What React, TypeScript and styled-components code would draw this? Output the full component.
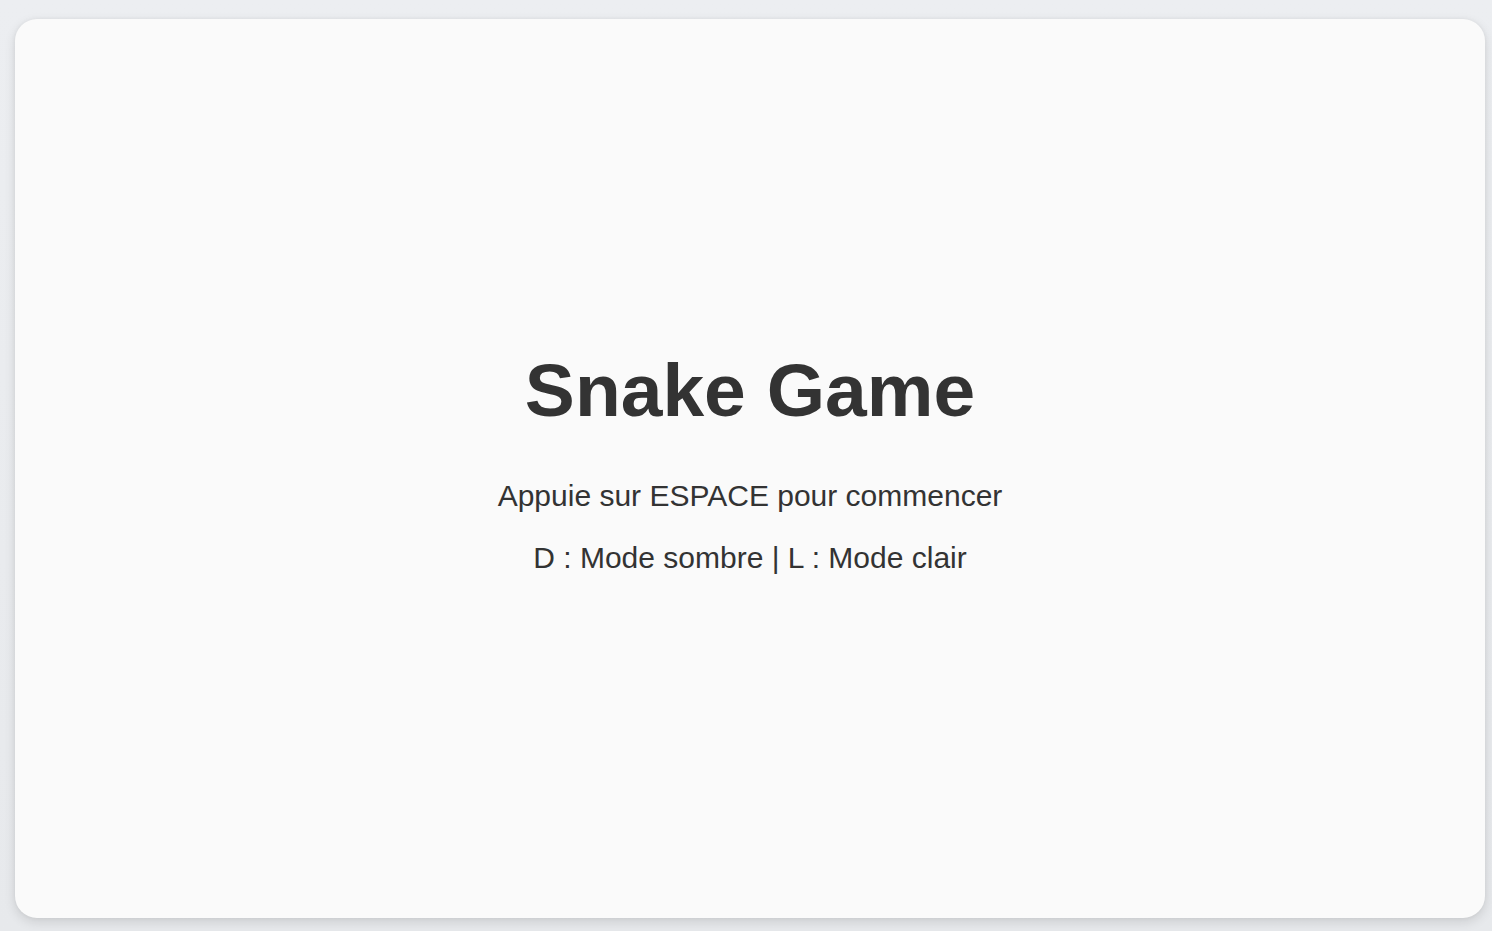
import React from "react";
import styled, { createGlobalStyle } from "styled-components";

const GlobalStyle = createGlobalStyle`
  html, body {
    margin: 0;
    padding: 0;
    background: #eceef1;
    font-family: "Liberation Sans", Arial, sans-serif;
  }
  #root {
    min-height: 100vh;
  }
`;

const Page = styled.div`
  width: 1492px;
  height: 931px;
  padding: 19px 7px 13px 15px;
  box-sizing: border-box;
  background: linear-gradient(180deg, #eceef1 0%, #e7e9ec 100%);
  overflow: hidden;
`;

const Card = styled.div`
  width: 1470px;
  height: 899px;
  box-sizing: border-box;
  border-radius: 22px;
  background: #fafafa;
  box-shadow: 0 4px 12px rgba(0, 0, 0, 0.12), 0 0 4px rgba(0, 0, 0, 0.05);
  display: flex;
  flex-direction: column;
  align-items: center;
  justify-content: center;
  padding-bottom: 15px;
  color: #333333;
`;

const Title = styled.h1`
  margin: 0 0 46px;
  font-size: 75px;
  font-weight: 700;
  color: #333333;
`;

const Line = styled.p<{ $last?: boolean }>`
  margin: 0 0 ${(p) => (p.$last ? 0 : 27.5)}px;
  font-size: 30px;
  color: #333333;
`;

export default function App() {
  return (
    <>
      <GlobalStyle />
      <Page>
        <Card>
          <Title>Snake Game</Title>
          <Line>Appuie sur ESPACE pour commencer</Line>
          <Line $last>D : Mode sombre | L : Mode clair</Line>
        </Card>
      </Page>
    </>
  );
}
